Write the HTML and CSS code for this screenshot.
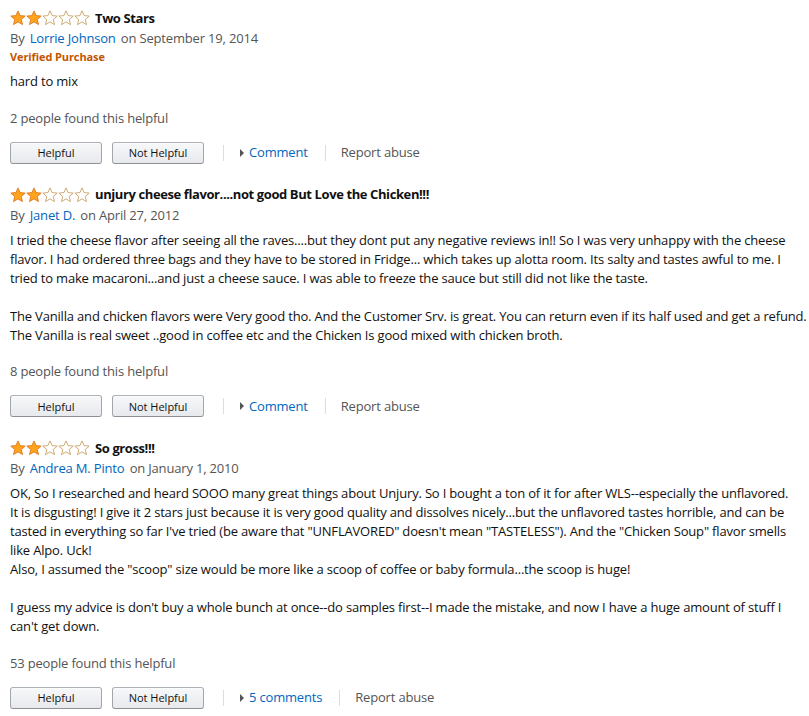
FILE: index.html
```html
<!DOCTYPE html>
<html>
<head>
<meta charset="utf-8">
<link rel="stylesheet" href="styles.css">
</head>
<body>
<svg width="0" height="0" class="defs">
  <defs>
    <symbol id="star-full" viewBox="0 0 16 16">
      <path d="M8 0.9 L10.1 5.6 L15.2 6.1 L11.3 9.5 L12.5 14.6 L8 11.9 L3.5 14.6 L4.7 9.5 L0.8 6.1 L5.9 5.6 Z" fill="#ffa41c" stroke="#de7921" stroke-width="0.9" stroke-linejoin="round"/>
    </symbol>
    <symbol id="star-empty" viewBox="0 0 16 16">
      <path d="M8 0.9 L10.1 5.6 L15.2 6.1 L11.3 9.5 L12.5 14.6 L8 11.9 L3.5 14.6 L4.7 9.5 L0.8 6.1 L5.9 5.6 Z" fill="#fff" stroke="#c8a265" stroke-width="0.9" stroke-linejoin="round"/>
    </symbol>
  </defs>
</svg>
<div class="reviews">

  <div class="review">
    <div class="title-row">
      <span class="stars">
        <svg class="star"><use href="#star-full"/></svg><svg class="star"><use href="#star-full"/></svg><svg class="star"><use href="#star-empty"/></svg><svg class="star"><use href="#star-empty"/></svg><svg class="star"><use href="#star-empty"/></svg>
      </span>
      <span class="title">Two Stars</span>
    </div>
    <div class="byline">By <a class="author">Lorrie Johnson</a> on September 19, 2014</div>
    <div class="verified">Verified Purchase</div>
    <div class="body">hard to mix</div>
    <div class="helpful-count">2 people found this helpful</div>
    <div class="actions">
      <div class="btns">
        <button class="btn">Helpful</button>
        <button class="btn">Not Helpful</button>
      </div>
      <span class="sep sep-first"></span>
      <a class="comment"><span class="tri"></span>Comment</a>
      <span class="sep"></span>
      <span class="report">Report abuse</span>
    </div>
  </div>

  <div class="review">
    <div class="title-row">
      <span class="stars">
        <svg class="star"><use href="#star-full"/></svg><svg class="star"><use href="#star-full"/></svg><svg class="star"><use href="#star-empty"/></svg><svg class="star"><use href="#star-empty"/></svg><svg class="star"><use href="#star-empty"/></svg>
      </span>
      <span class="title">unjury cheese flavor....not good But Love the Chicken!!!</span>
    </div>
    <div class="byline">By <a class="author">Janet D.</a> on April 27, 2012</div>
    <div class="body">
      <p>I tried the cheese flavor after seeing all the raves....but they dont put any negative reviews in!! So I was very unhappy with the cheese flavor. I had ordered three bags and they have to be stored in Fridge... which takes up alotta room. Its salty and tastes awful to me. I tried to make macaroni...and just a cheese sauce. I was able to freeze the sauce but still did not like the taste.</p>
      <p>The Vanilla and chicken flavors were Very good tho. And the Customer Srv. is great. You can return even if its half used and get a refund. The Vanilla is real sweet ..good in coffee etc and the Chicken Is good mixed with chicken broth.</p>
    </div>
    <div class="helpful-count">8 people found this helpful</div>
    <div class="actions">
      <div class="btns">
        <button class="btn">Helpful</button>
        <button class="btn">Not Helpful</button>
      </div>
      <span class="sep sep-first"></span>
      <a class="comment"><span class="tri"></span>Comment</a>
      <span class="sep"></span>
      <span class="report">Report abuse</span>
    </div>
  </div>

  <div class="review">
    <div class="title-row">
      <span class="stars">
        <svg class="star"><use href="#star-full"/></svg><svg class="star"><use href="#star-full"/></svg><svg class="star"><use href="#star-empty"/></svg><svg class="star"><use href="#star-empty"/></svg><svg class="star"><use href="#star-empty"/></svg>
      </span>
      <span class="title">So gross!!!</span>
    </div>
    <div class="byline">By <a class="author">Andrea M. Pinto</a> on January 1, 2010</div>
    <div class="body">
      <p>OK, So I researched and heard SOOO many great things about Unjury. So I bought a ton of it for after WLS--especially the unflavored.<br>It is disgusting! I give it 2 stars just because it is very good quality and dissolves nicely...but the unflavored tastes horrible, and can be tasted in everything so far I've tried (be aware that "UNFLAVORED" doesn't mean "TASTELESS"). And the "Chicken Soup" flavor smells<br>like Alpo. Uck!<br>Also, I assumed the "scoop" size would be more like a scoop of coffee or baby formula...the scoop is huge!</p>
      <p>I guess my advice is don't buy a whole bunch at once--do samples first--I made the mistake, and now I have a huge amount of stuff I can't get down.</p>
    </div>
    <div class="helpful-count">53 people found this helpful</div>
    <div class="actions">
      <div class="btns">
        <button class="btn">Helpful</button>
        <button class="btn">Not Helpful</button>
      </div>
      <span class="sep sep-first"></span>
      <a class="comment"><span class="tri"></span>5 comments</a>
      <span class="sep"></span>
      <span class="report">Report abuse</span>
    </div>
  </div>

</div>
</body>
</html>
```

FILE: styles.css
```css
html, body {
  margin: 0;
  padding: 0;
  overflow: hidden;
  background: #fff;
}
.defs {
  position: absolute;
  width: 0;
  height: 0;
}
body {
  font-family: "Open Sans", "Noto Sans", sans-serif;
  font-size: 13px;
  line-height: 19px;
  letter-spacing: -0.18px;
  color: #111;
}
.reviews {
  width: 800px;
  padding: 8px 0 0 10px;
}
.review {
  margin-bottom: 21px;
}
.title-row {
  display: flex;
  align-items: center;
  height: 20px;
}
.stars {
  display: inline-flex;
  margin-right: 5px;
}
.star {
  width: 16px;
  height: 16px;
}
.title {
  font-weight: bold;
  letter-spacing: -0.4px;
}
.byline {
  color: #555;
  margin-top: 1px;
}
.author {
  color: #0066c0;
  margin: 0 2px;
}
.verified {
  color: #c45500;
  font-weight: bold;
  font-size: 11px;
  line-height: 18px;
  letter-spacing: -0.1px;
}
.body {
  margin-top: 6px;
}
.body p {
  margin: 0 0 19px 0;
}
.body p:last-child {
  margin-bottom: 0;
}
.helpful-count {
  color: #555;
  margin-top: 17.5px;
}
.actions {
  display: flex;
  align-items: center;
  margin-top: 14px;
  height: 22px;
}
.btns {
  display: flex;
  gap: 10px;
}
.btn {
  width: 92px;
  height: 22px;
  padding: 0;
  border: 1px solid #adb1b8;
  border-color: #adb1b8 #a2a6ac #8d9096;
  border-radius: 3px;
  background: linear-gradient(to bottom, #f7f8fa, #e7e9ec);
  font-family: "Open Sans", "Noto Sans", sans-serif;
  font-size: 11px;
  color: #111;
  box-shadow: 0 1px 0 rgba(255,255,255,.6) inset;
}
.sep {
  width: 1px;
  height: 16px;
  background: #ddd;
  margin: 0 15px 0 17px;
}
.sep-first {
  margin: 0 16px 0 19px;
}
.comment {
  color: #0066c0;
  display: inline-flex;
  align-items: center;
}
.tri {
  width: 0;
  height: 0;
  border-left: 4px solid #555;
  border-top: 4px solid transparent;
  border-bottom: 4px solid transparent;
  margin-right: 5px;
}
.report {
  color: #555;
}
```
